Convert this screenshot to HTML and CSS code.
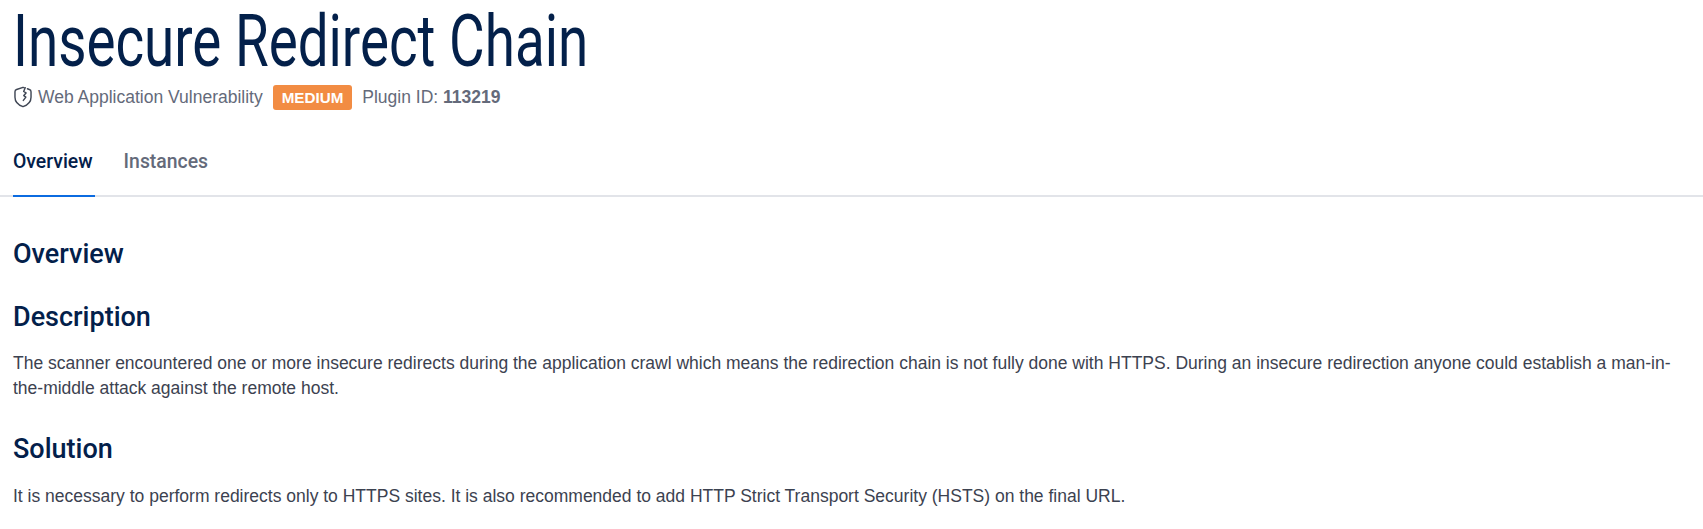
FILE: index.html
```html
<!DOCTYPE html>
<html lang="en">
<head>
  <meta charset="UTF-8">
  <title>Insecure Redirect Chain</title>
  <link rel="stylesheet" href="styles.css">
</head>
<body>
  <header class="page-head">
    <h1 class="title"><span class="title-text">Insecure Redirect Chain</span></h1>
    <div class="meta">
      <svg class="shield" width="20" height="22" viewBox="0 0 18 20" fill="none" stroke="#3f4654" stroke-width="1.3" stroke-linejoin="round" stroke-linecap="round">
        <path d="M10 1.500 9 1.200 3.200 3.200C2.300 3.500 1.700 4.300 1.700 5.200v5c0 3.900 2.900 7 7.300 8.600 4.400-1.600 7.300-4.700 7.300-8.600v-5c0-.9-.6-1.700-1.500-2L13 2.500"/>
        <path d="M11 1.500 9.600 5l2.200 1.300-2.100 2.400 1.900 1.400-2.300 3"/>
      </svg>
      <span class="meta-label">Web Application Vulnerability</span>
      <span class="badge">MEDIUM</span>
      <span class="meta-label">Plugin ID: <b>113219</b></span>
    </div>
  </header>

  <nav class="tabs">
    <a class="tab active">Overview</a>
    <a class="tab">Instances</a>
  </nav>

  <main class="content">
    <h2 class="section-main">Overview</h2>
    <h3>Description</h3>
    <p>The scanner encountered one or more insecure redirects during the application crawl which means the redirection chain is not fully done with HTTPS. During an insecure redirection anyone could establish a man-in-the-middle attack against the remote host.</p>
    <h3>Solution</h3>
    <p>It is necessary to perform redirects only to HTTPS sites. It is also recommended to add HTTP Strict Transport Security (HSTS) on the final URL.</p>
  </main>
</body>
</html>
```

FILE: styles.css
```css
body {
  margin: 0;
  padding: 0 0 0 13px;
  background: #fff;
  color: #3c4250;
  font-family: "Liberation Sans", Arial, sans-serif;
  font-size: 17.5px;
}
.title {
  margin: 0;
  height: 78px;
  line-height: 82px;
  font-family: Roboto, sans-serif;
  font-size: 73px;
  font-weight: 400;
  color: #03204a;
  white-space: nowrap;
}
.title-text {
  display: block;
  width: 770px;
  transform: scaleX(0.75);
  transform-origin: left center;
}
.meta {
  display: flex;
  align-items: center;
  height: 26px;
  margin-top: 6px;
  color: #646a7a;
}
.shield {
  margin-right: 5px;
}
.badge {
  margin: 0 10px;
  padding: 0 9px;
  line-height: 25px;
  border-radius: 3px;
  background: #f28c43;
  color: #fff;
  font-size: 15.2px;
  font-weight: bold;
}
.tabs {
  display: flex;
  gap: 29px;
  margin: 21px 0 0 -13px;
  padding-left: 13px;
  border-bottom: 2px solid #e2e4e9;
}
.tab {
  padding: 19px 2px 22px 0;
  margin-bottom: -2px;
  border-bottom: 2px solid transparent;
  font-family: Roboto, sans-serif;
  font-size: 19.4px;
  font-weight: 500;
  color: #646a7a;
}
.tab.active {
  color: #03204a;
  border-bottom-color: #0b6be0;
}
.content {
  padding-right: 13px;
}
h2, h3 {
  margin: 0;
  font-family: Roboto, sans-serif;
  font-size: 27px;
  font-weight: 500;
  line-height: 30px;
  color: #03204a;
}
.section-main {
  margin-top: 42px;
}
h3 {
  margin-top: 33px;
}
p {
  margin: 19px 0 0;
  line-height: 25px;
}
p:last-child {
  margin-top: 20px;
}
```
